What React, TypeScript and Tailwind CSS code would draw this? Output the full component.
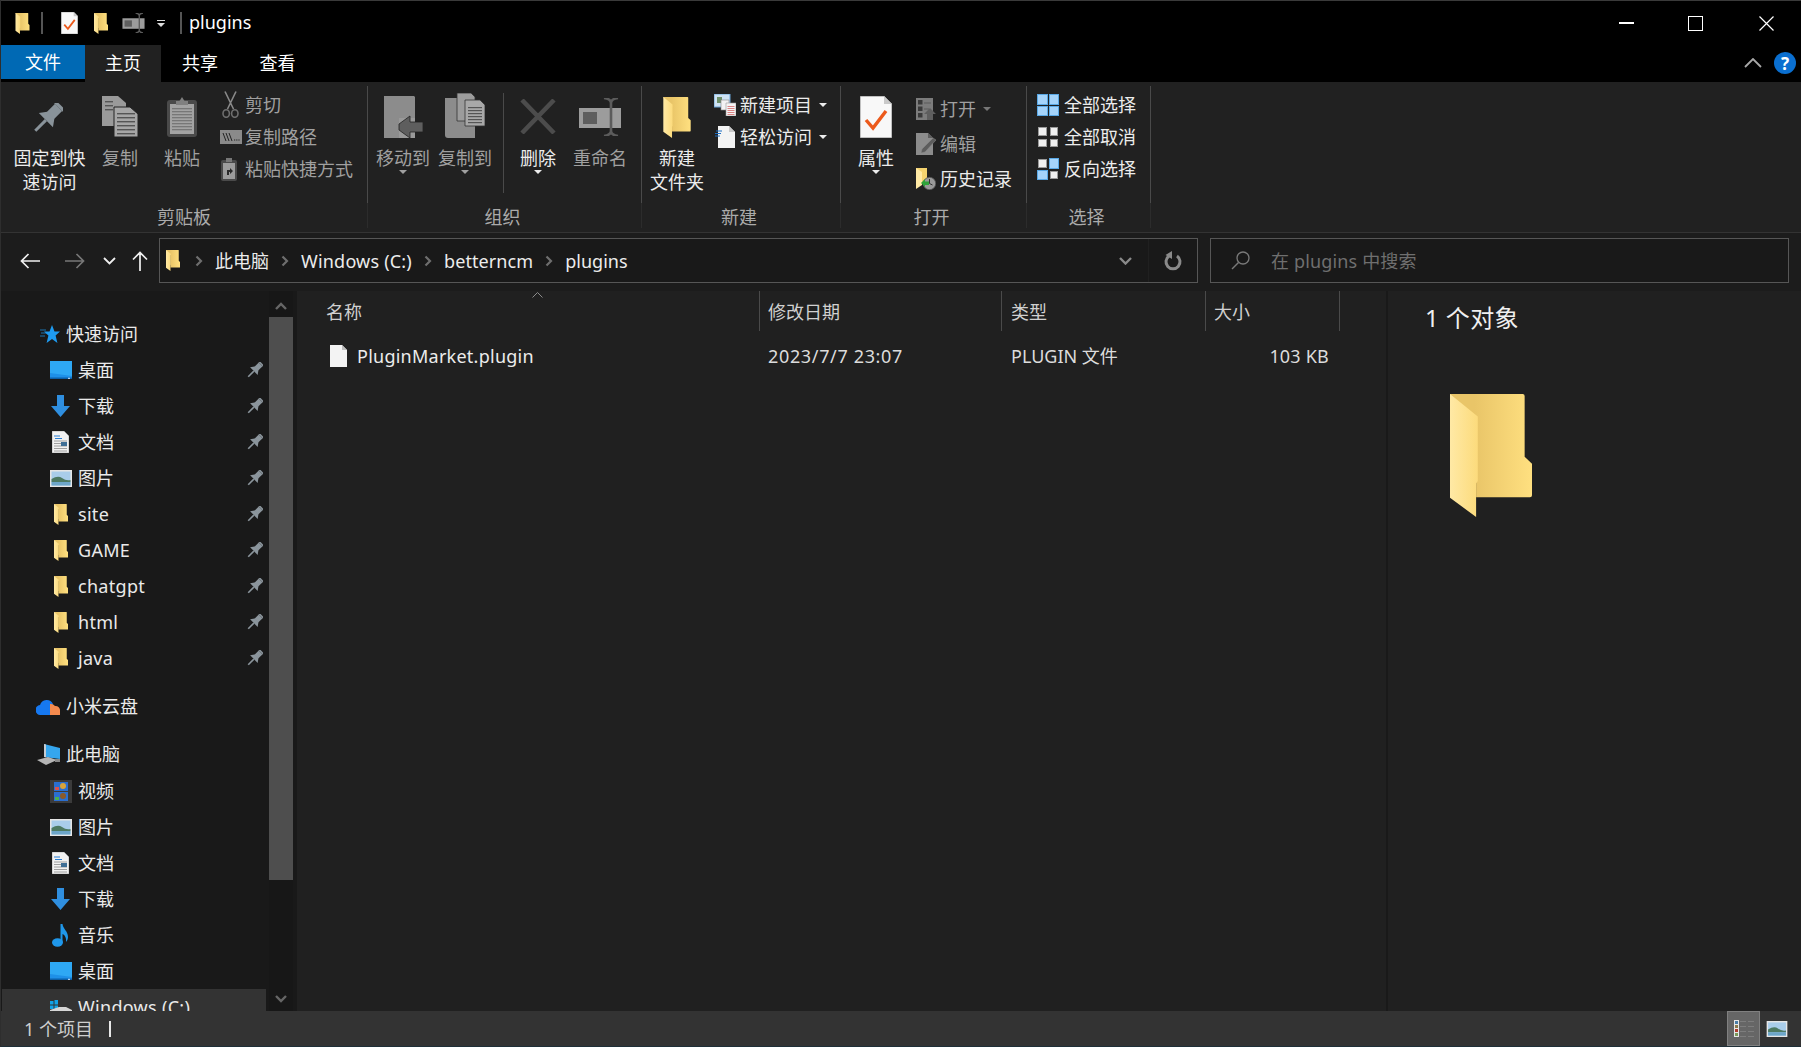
import type { ReactNode } from 'react';

type IconProps = { className?: string };

function Folder({ className }: IconProps) {
  return (
    <svg className={className} viewBox="210 310 245 367">
      <defs>
        <linearGradient id="fback" x1="0" x2="1" y1="0" y2="0">
          <stop offset="0.3" stopColor="#e9c568" />
          <stop offset="1" stopColor="#ffe080" />
        </linearGradient>
        <linearGradient id="ffront" x1="0" x2="1" y1="0" y2="0">
          <stop offset="0" stopColor="#ffe9a5" />
          <stop offset="1" stopColor="#fcdb7c" />
        </linearGradient>
      </defs>
      <path d="M210 310H427Q433 310 433 316V497L455 518V612Q455 618 449 618H288V400L210 320Z" fill="url(#fback)" />
      <path d="M210 310L293 377V570L288 577V677L210 620Z" fill="url(#ffront)" />
    </svg>
  );
}

function Pin({ className, color = '#8b959c' }: IconProps & { color?: string }) {
  return (
    <svg className={className} viewBox="0 0 30 30" fill={color}>
      <g transform="rotate(45 15 15)">
        <rect x="8" y="-3" width="14" height="3" rx="1" />
        <rect x="10" y="0" width="10" height="12" />
        <path d="M10 11H20L25 18H5Z" />
        <rect x="13.5" y="18" width="3" height="15" />
      </g>
    </svg>
  );
}

function ScissorsIcon({ className }: IconProps) {
  return (
    <svg className={className} viewBox="0 0 17 27" fill="none" stroke="#8a8a8a">
      <path d="M3 0.5L11.5 18M14 0.5L5.5 18" strokeWidth="1.6" />
      <ellipse cx="4.2" cy="22.5" rx="3.2" ry="3.8" stroke="#6e6e6e" strokeWidth="1.6" />
      <ellipse cx="12.8" cy="22.5" rx="3.2" ry="3.8" stroke="#6e6e6e" strokeWidth="1.6" />
    </svg>
  );
}

function CopyIcon({ className }: IconProps) {
  const lines = [12, 16, 20, 24, 28, 32];
  return (
    <svg className={className} viewBox="0 0 36 41">
      <path d="M0 0H16L24 7V30H0Z" fill="#9a9a9a" />
      <path d="M12 11H28L36 18V41H12Z" fill="#a6a6a6" stroke="#222" strokeWidth="1" />
      {lines.map((y) => (
        <rect key={y} x="15" y={y + 5} width="18" height="1.4" fill="#555" />
      ))}
      {lines.slice(0, 3).map((y) => (
        <rect key={y} x="3" y={y - 7} width="8" height="1.4" fill="#555" />
      ))}
    </svg>
  );
}

function PasteIcon({ className }: IconProps) {
  return (
    <svg className={className} viewBox="0 0 30 40">
      <rect x="0" y="3" width="30" height="37" rx="3" fill="#4a4a4a" />
      <rect x="3" y="7" width="24" height="30" fill="#a3a3a3" />
      {[11, 14, 17, 20, 23, 26, 29, 32].map((y) => (
        <rect key={y} x="5" y={y} width="20" height="1.3" fill="#777" />
      ))}
      <path d="M9 8V4H12.5L15 0L17.5 4H21V8Z" fill="#808080" />
    </svg>
  );
}

function CopyPathIcon({ className }: IconProps) {
  return (
    <svg className={className} viewBox="0 0 22 14">
      <rect width="22" height="14" fill="#8a8a8a" />
      <path d="M3 3L6 11M6 3L9 11M9 3L12 11" stroke="#222" strokeWidth="1" />
      <path d="M14 10H20" stroke="#222" strokeWidth="1.2" strokeDasharray="1.2 1" />
    </svg>
  );
}

function ShortcutIcon({ className }: IconProps) {
  return (
    <svg className={className} viewBox="0 0 16 23">
      <rect y="2" width="16" height="21" rx="2" fill="#4a4a4a" />
      <rect x="2" y="5" width="12" height="16" fill="#9c9c9c" />
      <path d="M5 0H11V4H5Z" fill="#777" />
      <path d="M6 17V12H9V10L12 13L9 16V14H8V17Z" fill="#2a2a2a" />
    </svg>
  );
}

function MoveIcon({ className }: IconProps) {
  return (
    <svg className={className} viewBox="0 0 39 42">
      <path d="M0 0H30L31 1V22H15V42H0Z" fill="#8c8c8c" />
      <path d="M15 22H31V42H15Z" fill="#999" />
      <path d="M15 28L26 20V26H39V36H26V42L15 34Z" fill="#5e5e5e" stroke="#222" strokeWidth="0.8" />
    </svg>
  );
}

function CopyToIcon({ className }: IconProps) {
  return (
    <svg className={className} viewBox="0 0 40 45">
      <path d="M0 5H30V45H3Q0 45 0 42Z" fill="#8c8c8c" />
      <path d="M12 0H26L30 4V28H12Z" fill="#9c9c9c" stroke="#333" strokeWidth="0.8" />
      <path d="M20 7H35L40 12V33H20Z" fill="#a8a8a8" stroke="#333" strokeWidth="0.8" />
      {[14, 17, 20, 23, 26, 29].map((y) => (
        <rect key={y} x="23" y={y} width="14" height="1.2" fill="#555" />
      ))}
    </svg>
  );
}

function DeleteIcon({ className }: IconProps) {
  return (
    <svg className={className} viewBox="0 0 36 35">
      <path d="M2 1L34 34M34 1L2 34" stroke="#4c4c4c" strokeWidth="4.5" />
    </svg>
  );
}

function RenameIcon({ className }: IconProps) {
  return (
    <svg className={className} viewBox="0 0 42 38">
      <rect x="0" y="10" width="42" height="20" fill="#9c9c9c" />
      <rect x="4" y="14" width="14" height="12" fill="#5e5e5e" />
      <path d="M32 3V35M25 0Q32 1 32 5Q32 1 39 0M25 38Q32 37 32 33Q32 37 39 38" stroke="#5c5c5c" strokeWidth="2.6" fill="none" />
    </svg>
  );
}

function NewItemIcon({ className }: IconProps) {
  return (
    <svg className={className} viewBox="0 0 22 22">
      <rect x="0" y="0" width="16" height="13" fill="#cfe3f5" stroke="#6aa5d8" strokeWidth="1" />
      <rect x="3" y="3" width="5" height="6" fill="#6d8f6a" />
      <rect x="7" y="6" width="8" height="10" fill="#f3f3f3" stroke="#888" strokeWidth="0.6" />
      <path d="M12 9H22V22H12Z" fill="#f5f5f5" stroke="#999" strokeWidth="0.6" />
      {[12, 14, 16, 18, 20].map((y) => (
        <rect key={y} x="13.5" y={y} width="7" height="0.8" fill="#d46a6a" />
      ))}
    </svg>
  );
}

function EasyAccessIcon({ className }: IconProps) {
  return (
    <svg className={className} viewBox="0 0 20 22">
      <path d="M3 0H14L20 6V22H3Z" fill="#f3f3f3" />
      <path d="M14 0L20 6H14Z" fill="#c9c9c9" />
      <path d="M1 5H7M0 7.5H6M0 10H5" stroke="#1d6fc4" strokeWidth="1.1" />
    </svg>
  );
}

function PropertiesIcon({ className }: IconProps) {
  return (
    <svg className={className} viewBox="0 0 32 42">
      <path d="M0 0H24L32 8V42H0Z" fill="#f8f8f8" stroke="#888" strokeWidth="1" />
      <path d="M24 0L32 8H24Z" fill="#c9c9c9" />
      <path d="M6 24L13 32L26 15" fill="none" stroke="#ec5a1c" strokeWidth="3.4" />
    </svg>
  );
}

function OpenIcon({ className }: IconProps) {
  return (
    <svg className={className} viewBox="0 0 20 22">
      <rect width="17" height="22" fill="#7c7c7c" />
      {[2, 8.5, 15].map((y) => (
        <rect key={y} x="2" y={y} width="4.5" height="4.5" fill="#3a3a3a" />
      ))}
      <path d="M8 5H15M8 11H13" stroke="#5a5a5a" strokeWidth="1" />
      <path d="M14 10L20 16H17V22H11V16H8Z" fill="#5e5e5e" />
    </svg>
  );
}

function EditIcon({ className }: IconProps) {
  return (
    <svg className={className} viewBox="0 0 20 22">
      <path d="M0 0H12L17 5V22H0Z" fill="#8c8c8c" />
      <path d="M12 0L17 5H12Z" fill="#5e5e5e" />
      <path d="M5 20L6 16L17 5L20 7L9 19Z" fill="#5c5c5c" stroke="#8c8c8c" strokeWidth="0.5" />
    </svg>
  );
}

function HistoryIcon({ className }: IconProps) {
  return (
    <svg className={className} viewBox="0 0 20 22">
      <path d="M0 0H11V14H0Z" fill="#f5d36f" />
      <path d="M0 0L6 4V17L0 21Z" fill="#ffe9a5" />
      <circle cx="13.5" cy="15.5" r="6.2" fill="#9a9a9a" stroke="#555" strokeWidth="0.8" />
      <path d="M13.5 11V15.5L16.5 17" fill="none" stroke="#333" strokeWidth="1" />
      <path d="M5 15L9 11V13.5H13V17H9V19Z" fill="#2fa33a" />
    </svg>
  );
}

function Squares({ cells }: { cells: string[] }) {
  return (
    <span className="grid h-[22px] w-[22px] grid-cols-2 gap-[1px]">
      {cells.map((c, i) => (
        <span key={i} className={c === 'b' ? 'border border-[#5aa9e6] bg-[#a5d4fb]' : 'border border-[#9a9a9a] bg-[#f0f0f0] m-[1px]'} />
      ))}
    </span>
  );
}

function Tri({ className }: IconProps) {
  return (
    <svg className={className} viewBox="0 0 8 4">
      <path d="M0 0H8L4 4Z" fill="currentColor" />
    </svg>
  );
}

function Chevron({ className }: IconProps) {
  return (
    <svg className={className} viewBox="0 0 8 12">
      <path d="M1.5 1.5L6 6L1.5 10.5" fill="none" stroke="currentColor" strokeWidth="2.2" />
    </svg>
  );
}

function Desktop({ className }: IconProps) {
  return (
    <svg className={className} viewBox="0 0 22 18">
      <rect width="22" height="18" fill="#1e90e8" />
      <path d="M0 0H22V15L0 12Z" fill="#2ea8f4" />
      <rect x="0" y="16.5" width="22" height="1.5" fill="#0b5fa8" />
      <rect x="18" y="16.8" width="2" height="1" fill="#d8ecff" />
    </svg>
  );
}

function DownloadIcon({ className }: IconProps) {
  return (
    <svg className={className} viewBox="0 0 19 22">
      <path d="M6 0H13V11H19L9.5 22L0 11H6Z" fill="#2f8fe0" />
    </svg>
  );
}

function DocIcon({ className }: IconProps) {
  return (
    <svg className={className} viewBox="0 0 17 22">
      <path d="M0 0H12L17 5V22H0Z" fill="#f2f2f2" stroke="#999" strokeWidth="0.6" />
      <path d="M2 5H8M3 7.5H10" stroke="#2a7fd4" strokeWidth="1.2" />
      {[10, 12.5, 15, 17.5, 20].map((y) => (
        <path key={y} d={`M2 ${y}H15`} stroke="#8a8a8a" strokeWidth="0.8" />
      ))}
      <rect x="9" y="11" width="6" height="4" fill="#3f6f96" />
    </svg>
  );
}

function PictureIcon({ className }: IconProps) {
  return (
    <svg className={className} viewBox="0 0 22 17">
      <rect width="22" height="17" fill="#e6e6e6" />
      <rect x="1.5" y="1.5" width="19" height="14" fill="#a9cdea" />
      <path d="M1.5 9Q8 5 12 8T20.5 10V12H1.5Z" fill="#4d7a62" />
      <rect x="1.5" y="12" width="19" height="3.5" fill="#6da6c9" />
    </svg>
  );
}

function Star({ className }: IconProps) {
  return (
    <svg className={className} viewBox="0 0 20 18">
      <path d="M12 0L14.5 6.4H20L15.6 10.6L17.4 18L12 14L6.6 18L8.4 10.6L4 6.4H9.5Z" fill="#1e9bf0" />
      <path d="M0 5H6M1 8H7M0 11H5" stroke="#1e9bf0" strokeWidth="0.7" />
    </svg>
  );
}

function Cloud({ className }: IconProps) {
  return (
    <svg className={className} viewBox="0 0 24 17">
      <path d="M5 17A5 5 0 0 1 4 7A7 7 0 0 1 17 6L14 17Z" fill="#1678f0" />
      <path d="M14 6A5 5 0 0 1 19 8A4.5 4.5 0 0 1 24 13V17H14Z" fill="#f48a4e" />
    </svg>
  );
}

function PcIcon({ className }: IconProps) {
  return (
    <svg className={className} viewBox="0 0 23 21">
      <path d="M7 0L23 4V15L7 13Z" fill="#35a6ee" />
      <path d="M7 0L9 0.5V13.2L7 13Z" fill="#c6ccd2" />
      <path d="M0 16L11 13L20 16L9 21Z" fill="#b5b5b5" />
      <path d="M18 15H23V18H18Z" fill="#8a8a8a" />
    </svg>
  );
}

function VideoIcon({ className }: IconProps) {
  return (
    <svg className={className} viewBox="0 0 22 23">
      <rect width="22" height="23" fill="#3b3b3b" />
      <rect x="4" y="2" width="14" height="9" fill="#2b6fd0" />
      <rect x="4" y="12" width="14" height="9" fill="#2b6fd0" />
      <circle cx="13" cy="6" r="3" fill="#d9a43b" />
      <circle cx="13" cy="16" r="3" fill="#8a5a2b" />
      <rect x="5" y="7" width="4" height="3" fill="#d9534f" />
      <rect x="5" y="17" width="4" height="3" fill="#4caf50" />
    </svg>
  );
}

function MusicIcon({ className }: IconProps) {
  return (
    <svg className={className} viewBox="0 0 17 23">
      <ellipse cx="5.5" cy="18.5" rx="5.5" ry="4.2" fill="#1f97ea" />
      <path d="M8.5 0H10.5C11 5 16 7 16 13C16 15 15 17 14 18C14.5 14 13 11 10.5 10V18.5H8.5Z" fill="#1f97ea" />
    </svg>
  );
}

function DriveIcon({ className }: IconProps) {
  return (
    <svg className={className} viewBox="0 0 22 14">
      <path d="M0 1H3.5V4.5H0ZM4.5 0H8V4.5H4.5ZM0 5.5H3.5V9H0ZM4.5 5.5H8V9H4.5Z" fill="#12a3e8" />
      <path d="M0 10L9 7H16L22 10V14H0Z" fill="#d6d6d6" />
    </svg>
  );
}

function Large({
  icon,
  lines,
  width,
  dim,
  arrow,
}: {
  icon: ReactNode;
  lines: string[];
  width: string;
  dim?: boolean;
  arrow?: boolean;
}) {
  return (
    <div className={`flex flex-col items-center pt-[14px] ${width} ${dim ? 'text-[#a0a0a0]' : 'text-[#ececec]'}`}>
      <div className="flex h-[50px] items-start justify-center">{icon}</div>
      {lines.map((l) => (
        <span key={l} className="whitespace-nowrap leading-[24px]">
          {l}
        </span>
      ))}
      {arrow && <Tri className="h-[4px] w-[8px]" />}
    </div>
  );
}

function Small({
  icon,
  label,
  dim,
  height,
  iconBox,
  arrow,
}: {
  icon: ReactNode;
  label: string;
  dim?: boolean;
  height: string;
  iconBox: string;
  arrow?: boolean;
}) {
  return (
    <div className={`flex items-center whitespace-nowrap ${height} ${dim ? 'text-[#a0a0a0]' : 'text-[#ececec]'}`}>
      <span className={`flex shrink-0 justify-center ${iconBox}`}>{icon}</span>
      <span className="leading-[24px]">{label}</span>
      {arrow && <Tri className={`ml-[7px] h-[4px] w-[8px] ${dim ? 'text-[#777]' : 'text-[#ececec]'}`} />}
    </div>
  );
}

function Group({ label, width, labelPad = '', children }: { label: string; width: string; labelPad?: string; children: ReactNode }) {
  return (
    <div className={`flex h-full shrink-0 ${width}`}>
      <div className="flex min-w-0 flex-1 flex-col">
        <div className="flex h-[121px]">{children}</div>
        <div className={`flex h-[29px] items-center justify-center pb-[1px] text-[#ababab] ${labelPad}`}>{label}</div>
      </div>
      <div className="flex w-px shrink-0 flex-col pt-[4px] pb-[4px]">
        <div className="h-[117px] bg-[#4a4a4a]" />
        <div className="flex-1 bg-[#2c2c2c]" />
      </div>
    </div>
  );
}

function Tab({ label, width, active, file }: { label: string; width: string; active?: boolean; file?: boolean }) {
  if (file) {
    return <div className={`flex h-[34px] items-center justify-center bg-[#0069b4] text-white ${width}`}>{label}</div>;
  }
  return (
    <div className={`flex h-[37px] items-center justify-center pb-[1px] text-white ${width} ${active ? 'bg-[#212121]' : ''}`}>
      {label}
    </div>
  );
}

function NavRow({
  icon,
  label,
  pin,
  latin,
  indent = 'w-[76px]',
  className = '',
}: {
  icon?: ReactNode;
  label: string;
  pin?: boolean;
  latin?: boolean;
  indent?: string;
  className?: string;
}) {
  return (
    <div className={`flex h-[36px] shrink-0 items-center whitespace-nowrap text-[#eaeaea] ${className}`}>
      <span className={`flex shrink-0 justify-end pr-[6px] ${indent}`}>{icon}</span>
      <span className={`leading-[24px] ${latin ? 'tracking-[0.3px]' : ''}`}>{label}</span>
      {pin && <Pin className="ml-auto mr-[3px] h-[16px] w-[16px]" />}
    </div>
  );
}

const columns = ['w-[463px] pl-[29px]', 'w-[242px] pl-[8px]', 'w-[204px] pl-[9px]', 'w-[134px] pl-[8px]'];

export default function App() {
  const smallG1 = 'h-[32px]';
  return (
    <div className="flex h-[1047px] w-[1801px] flex-col overflow-hidden border-l border-[#2e2e2e] bg-[#191919] font-['Noto_Sans','Noto_Sans_CJK_SC',sans-serif] text-[18px]">
      {/* title bar */}
      <div className="flex h-[45px] shrink-0 items-center border-t border-[#3a3a3a] bg-black text-white">
        <Folder className="ml-[14px] h-[21px] w-[15px]" />
        <div className="ml-[11px] h-[22px] w-[2px] bg-[#555]" />
        <PropertiesIcon className="ml-[18px] h-[22px] w-[17px]" />
        <Folder className="ml-[16px] h-[21px] w-[14px]" />
        <RenameIcon className="ml-[14px] h-[20px] w-[23px]" />
        <div className="ml-[12px] flex flex-col items-center gap-[2px]">
          <div className="h-[1px] w-[8px] bg-[#ddd]" />
          <Tri className="h-[4px] w-[8px] text-[#ddd]" />
        </div>
        <div className="ml-[15px] h-[22px] w-[2px] bg-[#555]" />
        <span className="mb-[2px] ml-[7px] leading-[24px]">plugins</span>
        <div className="ml-auto flex items-center pr-[27px]">
          <div className="h-[2px] w-[15px] bg-white" />
          <div className="ml-[54px] h-[15px] w-[15px] border-[1.5px] border-white" />
          <svg className="ml-[56px] h-[15px] w-[15px]" viewBox="0 0 15 15">
            <path d="M0.5 0.5L14.5 14.5M14.5 0.5L0.5 14.5" stroke="#fff" strokeWidth="1.2" />
          </svg>
        </div>
      </div>

      {/* tabs */}
      <div className="flex h-[37px] shrink-0 items-start bg-black">
        <Tab file label="文件" width="w-[84px]" />
        <Tab active label="主页" width="w-[76px]" />
        <Tab label="共享" width="w-[78px]" />
        <Tab label="查看" width="w-[77px]" />
        <div className="ml-auto flex items-center pr-[5px] pt-[7px]">
          <svg className="h-[10px] w-[18px]" viewBox="0 0 18 10">
            <path d="M1 9L9 1L17 9" fill="none" stroke="#a8a8a8" strokeWidth="1.8" />
          </svg>
          <span className="ml-[12px] flex h-[22px] w-[22px] items-center justify-center rounded-full bg-[#0a6fd0] text-[17px] leading-none font-bold text-white">
            ?
          </span>
        </div>
      </div>

      {/* ribbon */}
      <div className="flex h-[151px] shrink-0 border-b border-[#333] bg-[#212121]">
        <Group label="剪贴板" width="w-[367px]">
          <Large width="w-[97px]" lines={['固定到快', '速访问']} icon={<Pin color="#89939a" className="mr-[4px] mt-[7px] h-[30px] w-[30px]" />} />
          <Large dim width="w-[44px]" lines={['复制']} icon={<CopyIcon className="h-[41px] w-[36px]" />} />
          <Large dim width="w-[80px]" lines={['粘贴']} icon={<PasteIcon className="mt-[1px] h-[40px] w-[30px]" />} />
          <div className="-ml-[2px] flex flex-col pt-[7px]">
            <Small dim height={smallG1} iconBox="w-[25px] pr-[4px] pb-[1px]" label="剪切" icon={<ScissorsIcon className="h-[27px] w-[17px]" />} />
            <Small dim height={smallG1} iconBox="w-[25px] pr-[3px]" label="复制路径" icon={<CopyPathIcon className="h-[14px] w-[22px]" />} />
            <Small dim height={smallG1} iconBox="w-[25px] pr-[7px]" label="粘贴快捷方式" icon={<ShortcutIcon className="h-[23px] w-[16px]" />} />
          </div>
        </Group>
        <Group label="组织" labelPad="pr-[4px]" width="w-[274px]">
          <Large dim arrow width="w-[70px]" lines={['移动到']} icon={<MoveIcon className="h-[42px] w-[39px]" />} />
          <Large dim arrow width="w-[54px]" lines={['复制到']} icon={<CopyToIcon className="-mt-[3px] h-[45px] w-[40px]" />} />
          <div className="ml-[11px] mt-[11px] h-[100px] w-px bg-[#4a4a4a]" />
          <Large arrow width="w-[68px]" lines={['删除']} icon={<DeleteIcon className="mt-[3px] h-[35px] w-[36px]" />} />
          <Large dim width="w-[56px]" lines={['重命名']} icon={<RenameIcon className="mt-[2px] h-[38px] w-[42px]" />} />
        </Group>
        <Group label="新建" labelPad="pr-[4px]" width="w-[199px]">
          <Large width="w-[70px]" lines={['新建', '文件夹']} icon={<Folder className="mt-[1px] h-[41px] w-[28px]" />} />
          <div className="flex flex-col pt-[7px]">
            <Small arrow height={smallG1} iconBox="w-[28px] pr-[2px]" label="新建项目" icon={<NewItemIcon className="h-[22px] w-[22px]" />} />
            <Small arrow height={smallG1} iconBox="w-[28px] pr-[2px]" label="轻松访问" icon={<EasyAccessIcon className="h-[22px] w-[20px]" />} />
          </div>
        </Group>
        <Group label="打开" labelPad="pr-[4px]" width="w-[186px]">
          <Large arrow width="w-[70px]" lines={['属性']} icon={<PropertiesIcon className="h-[42px] w-[32px]" />} />
          <div className="flex flex-col pt-[9px]">
            <Small dim arrow height="h-[35px]" iconBox="w-[29px] pl-[3px] pr-[2px]" label="打开" icon={<OpenIcon className="h-[22px] w-[20px]" />} />
            <Small dim height="h-[35px]" iconBox="w-[29px] pl-[3px] pr-[2px]" label="编辑" icon={<EditIcon className="h-[22px] w-[20px]" />} />
            <Small height="h-[35px]" iconBox="w-[29px] pl-[3px] pr-[2px]" label="历史记录" icon={<HistoryIcon className="h-[22px] w-[20px]" />} />
          </div>
        </Group>
        <Group label="选择" labelPad="pr-[4px]" width="w-[124px]">
          <div className="flex flex-col pl-[10px] pt-[7px]">
            <Small height={smallG1} iconBox="w-[27px] pr-[5px]" label="全部选择" icon={<Squares cells={['b', 'b', 'b', 'b']} />} />
            <Small height={smallG1} iconBox="w-[27px] pr-[5px]" label="全部取消" icon={<Squares cells={['w', 'w', 'w', 'w']} />} />
            <Small height={smallG1} iconBox="w-[27px] pr-[5px]" label="反向选择" icon={<Squares cells={['w', 'b', 'b', 'w']} />} />
          </div>
        </Group>
      </div>

      {/* address row */}
      <div className="flex h-[58px] shrink-0 bg-[#1c1c1c] pt-[5px]">
        <div className="flex h-[45px] items-center text-[#eee]">
          <span className="flex w-[57px] justify-center">
            <svg className="h-[16px] w-[20px]" viewBox="0 0 20 16">
              <path d="M20 8H1.5M8.5 1L1.5 8L8.5 15" fill="none" stroke="#f0f0f0" strokeWidth="1.7" />
            </svg>
          </span>
          <span className="flex w-[34px] justify-center">
            <svg className="h-[16px] w-[20px]" viewBox="0 0 20 16">
              <path d="M0 8H18.5M11.5 1L18.5 8L11.5 15" fill="none" stroke="#777" strokeWidth="1.7" />
            </svg>
          </span>
          <span className="flex w-[34px] justify-center">
            <svg className="h-[8px] w-[13px]" viewBox="0 0 13 8">
              <path d="M1 1L6.5 6.5L12 1" fill="none" stroke="#eee" strokeWidth="1.8" />
            </svg>
          </span>
          <span className="flex w-[28px] justify-center">
            <svg className="h-[20px] w-[16px]" viewBox="0 0 16 20">
              <path d="M8 20V1.5M1 8.5L8 1.5L15 8.5" fill="none" stroke="#f0f0f0" strokeWidth="1.7" />
            </svg>
          </span>
        </div>
        <div className="ml-[5px] flex h-[45px] w-[1039px] items-center border border-[#565656] bg-[#191919] text-[#ececec]">
          <Folder className="ml-[6px] h-[21px] w-[14px]" />
          <Chevron className="ml-[15px] mr-[12px] h-[12px] w-[8px] text-[#6e6e6e]" />
          <span className="leading-[24px]">此电脑</span>
          <Chevron className="ml-[12px] mr-[12px] h-[12px] w-[8px] text-[#6e6e6e]" />
          <span className="leading-[24px] tracking-[0.2px]">Windows (C:)</span>
          <Chevron className="ml-[12px] mr-[12px] h-[12px] w-[8px] text-[#6e6e6e]" />
          <span className="leading-[24px] tracking-[0.1px]">betterncm</span>
          <Chevron className="ml-[12px] mr-[12px] h-[12px] w-[8px] text-[#6e6e6e]" />
          <span className="leading-[24px]">plugins</span>
          <svg className="ml-auto mr-[16px] h-[8px] w-[13px]" viewBox="0 0 13 8">
            <path d="M1 1L6.5 6.5L12 1" fill="none" stroke="#8a8a8a" strokeWidth="2.4" />
          </svg>
          <div className="flex h-full w-[49px] items-center justify-center border-l border-[#202020]">
            <svg className="h-[20px] w-[18px]" viewBox="0 0 18 20">
              <path d="M5 5A7 7 0 1 0 13 5" fill="none" stroke="#8a8a8a" strokeWidth="3" />
              <path d="M8 0V8L1.5 4Z" fill="#8a8a8a" />
            </svg>
          </div>
        </div>
        <div className="ml-[12px] flex h-[45px] w-[579px] items-center border border-[#565656] bg-[#191919] text-[#6f6f6f]">
          <svg className="ml-[20px] h-[19px] w-[19px]" viewBox="0 0 19 19">
            <circle cx="12" cy="7" r="6" fill="none" stroke="#7a7a7a" strokeWidth="1.3" />
            <path d="M7.5 11.5L1 18" stroke="#7a7a7a" strokeWidth="1.5" />
          </svg>
          <span className="ml-[21px] leading-[24px] tracking-[0.15px]">在 plugins 中搜索</span>
        </div>
      </div>

      {/* main area */}
      <div className="flex min-h-0 flex-1">
        <div className="flex w-[296px] shrink-0 bg-[#191919]">
          <div className="flex w-[265px] shrink-0 flex-col overflow-hidden pl-[1px] pt-[25px]">
            <NavRow indent="w-[64px]" label="快速访问" icon={<Star className="h-[18px] w-[20px]" />} />
            <NavRow pin label="桌面" icon={<Desktop className="h-[18px] w-[22px]" />} />
            <NavRow pin label="下载" icon={<DownloadIcon className="mr-[2px] h-[22px] w-[19px]" />} />
            <NavRow pin label="文档" icon={<DocIcon className="mr-[3px] h-[22px] w-[17px]" />} />
            <NavRow pin label="图片" icon={<PictureIcon className="h-[17px] w-[22px]" />} />
            <NavRow pin latin label="site" icon={<Folder className="mr-[4px] h-[21px] w-[14px]" />} />
            <NavRow pin latin label="GAME" icon={<Folder className="mr-[4px] h-[21px] w-[14px]" />} />
            <NavRow pin latin label="chatgpt" icon={<Folder className="mr-[4px] h-[21px] w-[14px]" />} />
            <NavRow pin latin label="html" icon={<Folder className="mr-[4px] h-[21px] w-[14px]" />} />
            <NavRow pin latin label="java" icon={<Folder className="mr-[4px] h-[21px] w-[14px]" />} />
            <NavRow className="mt-[12px]" indent="w-[64px]" label="小米云盘" icon={<Cloud className="h-[17px] w-[24px]" />} />
            <NavRow className="mt-[12px]" indent="w-[64px]" label="此电脑" icon={<PcIcon className="h-[21px] w-[23px]" />} />
            <div className="h-[1px] shrink-0" />
            <NavRow label="视频" icon={<VideoIcon className="h-[23px] w-[22px]" />} />
            <NavRow label="图片" icon={<PictureIcon className="h-[17px] w-[22px]" />} />
            <NavRow label="文档" icon={<DocIcon className="mr-[3px] h-[22px] w-[17px]" />} />
            <NavRow label="下载" icon={<DownloadIcon className="mr-[2px] h-[22px] w-[19px]" />} />
            <NavRow label="音乐" icon={<MusicIcon className="mr-[3px] h-[23px] w-[17px]" />} />
            <NavRow label="桌面" icon={<Desktop className="h-[18px] w-[22px]" />} />
            <NavRow latin className="bg-[#333]" label="Windows (C:)" icon={<DriveIcon className="h-[14px] w-[22px]" />} />
          </div>
          <div className="ml-[3px] flex w-[24px] shrink-0 flex-col items-center bg-[#171717]">
            <svg className="mt-[11px] h-[8px] w-[12px]" viewBox="0 0 12 8">
              <path d="M1 7L6 2L11 7" fill="none" stroke="#666" strokeWidth="2.4" />
            </svg>
            <div className="mt-[7px] h-[563px] w-full bg-[#4e4e4e]" />
            <svg className="mt-[115px] h-[8px] w-[12px]" viewBox="0 0 12 8">
              <path d="M1 1L6 6L11 1" fill="none" stroke="#666" strokeWidth="2.4" />
            </svg>
          </div>
          <div className="w-[3px] bg-[#191919]" />
        </div>

        <div className="relative flex w-[1089px] shrink-0 flex-col bg-[#202020]">
          <svg className="absolute left-[235px] top-[1px] h-[6px] w-[11px]" viewBox="0 0 11 6">
            <path d="M0.5 5.5L5.5 0.5L10.5 5.5" fill="none" stroke="#8a8a8a" strokeWidth="1" />
          </svg>
          <div className="flex h-[40px] shrink-0 text-[#d0d0d0]">
            {['名称', '修改日期', '类型', '大小'].map((h, i) => (
              <div key={h} className={`flex items-center border-r border-[#4a4a4a] pt-[2px] leading-[24px] ${columns[i]}`}>
                {h}
              </div>
            ))}
          </div>
          <div className="mt-[7px] flex h-[36px] shrink-0 items-center text-[#dcdcdc]">
            <div className="flex w-[463px] items-center pl-[33px]">
              <svg className="h-[22px] w-[17px]" viewBox="0 0 17 22">
                <path d="M0 0H12L17 5V22H0Z" fill="#f3f3f3" />
                <path d="M12 0L17 5H12Z" fill="#bdbdbd" />
              </svg>
              <span className="ml-[10px] leading-[24px] tracking-[0.25px] text-[#ececec]">PluginMarket.plugin</span>
            </div>
            <div className="w-[242px] pl-[8px] leading-[24px] tracking-[0.65px]">2023/7/7 23:07</div>
            <div className="w-[204px] pl-[9px] leading-[24px]">PLUGIN 文件</div>
            <div className="w-[134px] pr-[11px] text-right leading-[24px] tracking-[0.2px]">103 KB</div>
          </div>
        </div>

        <div className="w-[2px] shrink-0 bg-[#191919]" />
        <div className="flex flex-1 flex-col bg-[#202020] pl-[37px] pt-[11px]">
          <span className="text-[24px] leading-[32px] tracking-[0.4px] text-[#f0f0f0]">1 个对象</span>
          <Folder className="ml-[25px] mt-[60px] h-[123px] w-[82px]" />
        </div>
      </div>

      {/* status bar */}
      <div className="flex h-[36px] shrink-0 flex-col">
        <div className="flex h-[35px] items-center bg-[#333] text-[#cfcfcf]">
          <span className="ml-[23px] leading-[24px]">1 个项目</span>
          <span className="ml-[16px] h-[16px] w-[2px] bg-[#e8e8e8]" />
          <div className="ml-auto flex h-full w-[33px] items-center justify-center border border-[#808080] bg-[#666]">
            <span className="flex flex-col gap-[1px] bg-[#e8e8e8] p-[1px]">
              <span className="h-[3px] w-[3px] bg-[#4a7ea8]" />
              <span className="h-[3px] w-[3px] bg-[#8a7a4a]" />
              <span className="h-[3px] w-[3px] bg-[#b03a2a]" />
              <span className="h-[3px] w-[3px] bg-[#7a9a5a]" />
            </span>
            <span className="ml-[1px] flex flex-col gap-[4px]">
              {[0, 1, 2, 3].map((r) => (
                <span key={r} className="flex gap-[2px]">
                  <span className="h-px w-[6px] bg-[#7d7d7d]" />
                  <span className="h-px w-[6px] bg-[#7d7d7d]" />
                </span>
              ))}
            </span>
          </div>
          <PictureIcon className="ml-[6px] mr-[13px] h-[16px] w-[22px]" />
        </div>
        <div className="h-px bg-[#1f2f38]" />
      </div>
    </div>
  );
}
